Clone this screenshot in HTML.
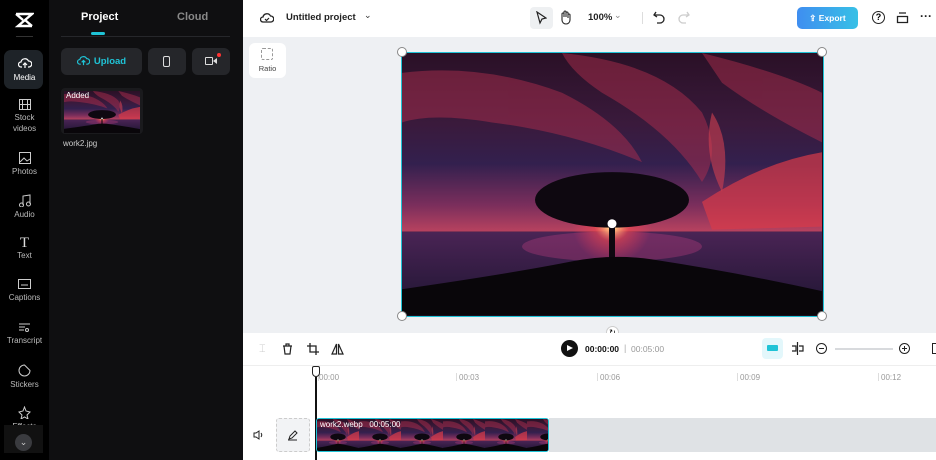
<!DOCTYPE html>
<html><head><meta charset="utf-8"><style>
*{margin:0;padding:0;box-sizing:border-box}
body{width:936px;height:460px;overflow:hidden;font-family:"Liberation Sans",sans-serif;background:#fff;position:relative}
.a{position:absolute}
.side{left:0;top:0;width:49px;height:460px;background:#000}
.panel{left:49px;top:0;width:194px;height:460px;background:#0f0f11}
.nav{position:absolute;left:0;width:49px;text-align:center;color:#bbb;font-size:8px;line-height:11px}
.nav svg{display:block;margin:0 auto 2px}
.btn{position:absolute;background:#25262a;border-radius:6px;top:48px;height:27px}
.tick{position:absolute;top:373px;width:1px;height:4px;background:#ddd}
.lbl{position:absolute;top:373px;font-size:8px;color:#999}
</style></head><body>
<svg width="0" height="0" style="position:absolute"><defs>
<linearGradient id="sky" x1="0" y1="0" x2="0" y2="1"><stop offset="0" stop-color="#2a1026"/><stop offset=".4" stop-color="#3a1a3c"/><stop offset=".62" stop-color="#33204e"/><stop offset=".85" stop-color="#7a2e5c"/><stop offset="1" stop-color="#b8425f"/></linearGradient>
<linearGradient id="sea" x1="0" y1="0" x2="0" y2="1"><stop offset="0" stop-color="#4a2455"/><stop offset="1" stop-color="#1c1430"/></linearGradient>
<radialGradient id="sun"><stop offset="0" stop-color="#fff"/><stop offset=".15" stop-color="#ffc080"/><stop offset=".45" stop-color="#ff4a4a" stop-opacity=".5"/><stop offset="1" stop-color="#ff3c5a" stop-opacity="0"/></radialGradient>
<symbol id="pic" viewBox="0 0 420 264" preserveAspectRatio="none">
<rect width="420" height="180" fill="url(#sky)"/>
<g fill="#b8304f" opacity=".45">
<path d="M0 20 Q80 10 160 40 Q220 70 240 110 Q170 80 90 70 Q30 60 0 70Z"/>
<path d="M160 0 Q260 10 300 60 Q320 100 300 130 Q270 80 200 40 Q170 20 160 0Z"/>
<path d="M300 0 Q380 20 420 40 L420 90 Q360 60 320 30Z"/>
</g>
<path d="M300 150 Q360 110 420 100 L420 175 L310 178Z" fill="#d93a48" opacity=".7"/>
<path d="M310 60 Q330 90 320 140 Q300 100 310 60Z" fill="#d04050" opacity=".6"/>
<rect y="180" width="420" height="84" fill="url(#sea)"/>
<ellipse cx="210" cy="195" rx="90" ry="15" fill="#c04080" opacity=".35"/>
<circle cx="210" cy="172" r="40" fill="url(#sun)"/>
<ellipse cx="210" cy="148" rx="77" ry="28" fill="#0e0810"/>
<rect x="207" y="165" width="6" height="42" fill="#0e0810"/>
<circle cx="210" cy="172" r="4.5" fill="#fff"/>
<path d="M0 238 Q110 222 170 210 Q210 202 250 208 Q340 222 420 240 L420 264 L0 264Z" fill="#09060a"/>
</symbol></defs></svg>

<div class="a side"></div>
<svg class="a" style="left:14px;top:12px" width="20" height="16" viewBox="0 0 20 16"><path d="M2 2h16L4 14h14M2 2l7 6M18 14l-7-6" stroke="#fff" stroke-width="2.4" fill="none"/></svg>
<div class="a" style="left:16px;top:36px;width:17px;height:1px;background:#333"></div>
<div class="a" style="left:4px;top:50px;width:39px;height:39px;background:#1e2328;border-radius:7px"></div>
<div class="nav" style="top:57px;color:#fff"><svg width="14" height="13" viewBox="0 0 14 13"><path d="M4 10H3a2.5 2.5 0 010-5 4 4 0 017.5-1A3 3 0 0111 10h-1M7 11V6M5 8l2-2 2 2" stroke="#fff" fill="none" stroke-width="1.2"/></svg>Media</div>
<div class="nav" style="top:99px"><svg width="12" height="11"><rect x=".5" y=".5" width="11" height="10" stroke="#ccc" fill="none"/><path d="M3.5 0v11M8.5 0v11M0 5.5h12" stroke="#ccc"/></svg>Stock<br>videos</div>
<div class="nav" style="top:152px"><svg width="12" height="12"><rect x=".5" y=".5" width="11" height="11" stroke="#ccc" fill="none"/><path d="M1 10l4-4 3 3 3-2" stroke="#ccc" fill="none"/></svg>Photos</div>
<div class="nav" style="top:194px"><svg width="12" height="13"><path d="M4 11V2l7-1v9" stroke="#ccc" fill="none"/><circle cx="2.5" cy="11" r="2" stroke="#ccc" fill="none"/><circle cx="9.5" cy="10" r="2" stroke="#ccc" fill="none"/></svg>Audio</div>
<div class="nav" style="top:236px"><span style="font-family:'Liberation Serif';font-size:15px;color:#ddd;display:block;line-height:14px">T</span>Text</div>
<div class="nav" style="top:279px"><svg width="13" height="11"><rect x=".5" y=".5" width="12" height="9" stroke="#ccc" fill="none"/><path d="M3 6h7" stroke="#ccc"/></svg>Captions</div>
<div class="nav" style="top:322px"><svg width="13" height="11"><path d="M1 2h11M1 5h6M1 8h5" stroke="#ccc"/><circle cx="9" cy="8" r="1.5" stroke="#ccc" fill="none"/></svg>Transcript</div>
<div class="nav" style="top:364px"><svg width="13" height="13"><path d="M6.5 1a5.5 5.5 0 105.5 5.5L6.5 1z" stroke="#ccc" fill="none"/></svg>Stickers</div>
<div class="nav" style="top:406px"><svg width="13" height="13"><path d="M6.5 1l1.5 4 4 1-3 3 1 4-3.5-2-3.5 2 1-4-3-3 4-1z" stroke="#ccc" fill="none"/></svg>Effects</div>
<div class="a" style="left:4px;top:425px;width:39px;height:28px;background:#111"></div>
<div class="a" style="left:15px;top:434px;width:17px;height:17px;border-radius:50%;background:#3a3b3f;color:#ccc;font-size:9px;text-align:center;line-height:16px">⌄</div>

<div class="a panel"></div>
<div class="a" style="left:81px;top:11px;color:#fff;font-weight:bold;font-size:11px">Project</div>
<div class="a" style="left:177px;top:11px;color:#888;font-weight:bold;font-size:11px">Cloud</div>
<div class="a" style="left:91px;top:32px;width:14px;height:3px;border-radius:2px;background:#1fc3d6"></div>
<div class="a" style="left:61px;top:36px;width:169px;height:1px;background:#26272b"></div>
<div class="btn" style="left:61px;width:81px"><div style="color:#1fc3d6;font-weight:bold;font-size:9.5px;text-align:center;line-height:27px"><svg width="13" height="11" viewBox="0 0 14 12" style="vertical-align:-2px;margin-right:4px"><path d="M4 10H3a2.5 2.5 0 010-5 4 4 0 017.5-1A3 3 0 0111 10h-1M7 11V6M5 8l2-2 2 2" stroke="#1fc3d6" fill="none" stroke-width="1.3"/></svg>Upload</div></div>
<div class="btn" style="left:148px;width:38px"><div style="position:absolute;left:15px;top:8px;width:7px;height:11px;border:1.3px solid #ddd;border-radius:2px"></div></div>
<div class="btn" style="left:192px;width:38px"><div style="position:absolute;left:13px;top:9px;width:8px;height:8px;border:1.3px solid #ddd;border-radius:1px"></div><div style="position:absolute;left:21px;top:10px;border:3px solid transparent;border-right:4px solid #ddd;border-left:0"></div><div style="position:absolute;left:25px;top:5px;width:4px;height:4px;border-radius:50%;background:#f33"></div></div>
<div class="a" style="left:61px;top:88px;width:82px;height:46px;border-radius:4px;overflow:hidden;background:#1a1a1d"><svg style="position:absolute;left:3px;top:3px" width="76" height="42"><use href="#pic" width="76" height="42"/></svg><div style="position:absolute;left:5px;top:3px;color:#fff;font-size:8px">Added</div></div>
<div class="a" style="left:63px;top:139px;color:#ccc;font-size:8px">work2.jpg</div>
<div class="a" style="left:243px;top:236px;width:5px;height:36px;background:#2a2b2e;border-radius:0 4px 4px 0"></div>

<!-- top bar -->
<div class="a" style="left:248px;top:0;width:688px;height:37px;background:#fff"></div>
<svg class="a" style="left:260px;top:11px" width="14" height="13" viewBox="0 0 14 13"><path d="M4 11H3a2.5 2.5 0 010-5 4 4 0 017.5-1A3 3 0 0111 11H4" stroke="#222" fill="none" stroke-width="1.3"/><path d="M5 8l1.5 1.5L9 7" stroke="#222" fill="none" stroke-width="1.2"/></svg>
<div class="a" style="left:286px;top:12px;font-size:9.5px;font-weight:bold;color:#222">Untitled project</div>
<div class="a" style="left:364px;top:10px;font-size:9px;color:#333">⌄</div>
<div class="a" style="left:530px;top:7px;width:23px;height:22px;background:#eef0f2;border-radius:4px"></div>
<svg class="a" style="left:535px;top:11px" width="12" height="14"><path d="M2 1l9 6-4 1-2 4z" stroke="#222" fill="none" stroke-width="1.2"/></svg>
<svg class="a" style="left:559px;top:10px" width="13" height="15"><path d="M3 8V4a1 1 0 012 0v3V2a1 1 0 012 0v5V3a1 1 0 012 0v5V5a1 1 0 012 0v5a4 4 0 01-4 4H7a4 4 0 01-4-4z" stroke="#222" fill="none" stroke-width="1.1"/></svg>
<div class="a" style="left:588px;top:12px;font-size:9.5px;color:#222;font-weight:bold">100%</div>
<div class="a" style="left:614px;top:10px;font-size:9px;color:#888">⌄</div>
<div class="a" style="left:642px;top:12px;width:1px;height:12px;background:#ddd"></div>
<svg class="a" style="left:653px;top:11px" width="12" height="13"><path d="M3 1L1 4l3 2M1 4h6a4 4 0 010 8H4" stroke="#222" fill="none" stroke-width="1.3"/></svg>
<svg class="a" style="left:678px;top:11px" width="12" height="13"><path d="M9 1l2 3-3 2M11 4H5a4 4 0 000 8h3" stroke="#ccc" fill="none" stroke-width="1.3"/></svg>
<div class="a" style="left:797px;top:7px;width:61px;height:22px;border-radius:5px;background:linear-gradient(90deg,#3f8ef0,#37c0e6);color:#fff;font-size:8.5px;font-weight:bold;line-height:22px;text-align:center">⇪ Export</div>
<div class="a" style="left:872px;top:11px;width:13px;height:13px;border:1.4px solid #222;border-radius:50%;font-size:9px;font-weight:bold;text-align:center;line-height:11px">?</div>
<svg class="a" style="left:896px;top:11px" width="13" height="13"><path d="M3 2h7M1.5 5.5h10v6h-10z" stroke="#222" fill="none" stroke-width="1.3"/></svg>
<div class="a" style="left:920px;top:9px;font-size:12px;color:#222;font-weight:bold">···</div>

<!-- canvas -->
<div class="a" style="left:243px;top:37px;width:693px;height:296px;background:#eef0f3"></div>
<div class="a" style="left:249px;top:43px;width:37px;height:35px;background:#fff;border-radius:6px"></div>
<div class="a" style="left:261px;top:48px;width:12px;height:12px;border:1px dashed #999;border-radius:2px"></div>
<div class="a" style="left:249px;top:64px;width:37px;text-align:center;font-size:7.5px;color:#444">Ratio</div>
<div class="a" style="left:401px;top:52px;width:423px;height:265px;border:1.5px solid #1fc3d6;background:#1a0f1e"><svg width="420" height="262" style="display:block"><use href="#pic" width="420" height="262"/></svg></div>
<div class="a" style="left:397px;top:47px;width:10px;height:10px;border-radius:50%;background:#fff;border:1px solid #888"></div>
<div class="a" style="left:817px;top:47px;width:10px;height:10px;border-radius:50%;background:#fff;border:1px solid #888"></div>
<div class="a" style="left:397px;top:311px;width:10px;height:10px;border-radius:50%;background:#fff;border:1px solid #888"></div>
<div class="a" style="left:817px;top:311px;width:10px;height:10px;border-radius:50%;background:#fff;border:1px solid #888"></div>
<div class="a" style="left:606px;top:326px;width:13px;height:13px;border-radius:50%;background:#fff;border:1px solid #ccc;font-size:8px;text-align:center;line-height:11px">↻</div>

<!-- timeline toolbar -->
<div class="a" style="left:243px;top:333px;width:693px;height:127px;background:#fff"></div>
<div class="a" style="left:243px;top:365px;width:693px;height:1px;background:#eee"></div>
<div class="a" style="left:259px;top:343px;font-size:11px;color:#ccc">⌶</div>
<svg class="a" style="left:282px;top:343px" width="11" height="12"><path d="M1 3h9M4 3V1h3v2M2 3l1 8h5l1-8" stroke="#222" fill="none" stroke-width="1.2"/></svg>
<svg class="a" style="left:307px;top:343px" width="12" height="12"><path d="M3 0v9h9M0 3h9v9" stroke="#222" fill="none" stroke-width="1.3"/></svg>
<svg class="a" style="left:331px;top:343px" width="13" height="12"><path d="M5.5 1L1 11h4.5zM7.5 1L12 11H7.5z" stroke="#222" fill="none" stroke-width="1.2"/></svg>
<div class="a" style="left:561px;top:340px;width:17px;height:17px;border-radius:50%;background:#111"></div>
<div class="a" style="left:567px;top:345px;border-left:6px solid #fff;border-top:3.5px solid transparent;border-bottom:3.5px solid transparent"></div>
<div class="a" style="left:585px;top:344px;font-size:8.5px;font-weight:bold;color:#111">00:00:00</div>
<div class="a" style="left:624px;top:343px;font-size:9px;color:#aaa">|</div>
<div class="a" style="left:631px;top:344px;font-size:8.5px;color:#999">00:05:00</div>
<div class="a" style="left:762px;top:338px;width:21px;height:21px;border-radius:4px;background:#e3f7fb"></div>
<div class="a" style="left:767px;top:345px;width:11px;height:6px;background:#1fc3d6;border-radius:1px"></div>
<svg class="a" style="left:791px;top:342px" width="13" height="13"><path d="M6.5 0v13M1 4h4v5H1M8 4h4v5H8" stroke="#222" fill="none" stroke-width="1.2"/></svg>
<div class="a" style="left:816px;top:343px;width:11px;height:11px;border:1.3px solid #222;border-radius:50%"></div><div class="a" style="left:819px;top:348px;width:5px;height:1.3px;background:#222"></div>
<div class="a" style="left:835px;top:348px;width:58px;height:1.5px;background:#d8dadd"></div>
<div class="a" style="left:899px;top:343px;width:11px;height:11px;border:1.3px solid #222;border-radius:50%"></div><div class="a" style="left:902px;top:348px;width:5px;height:1.3px;background:#222"></div><div class="a" style="left:904px;top:346px;width:1.3px;height:5px;background:#222"></div>
<div class="a" style="left:932px;top:343px;width:4px;height:11px;border:1.3px solid #222;border-right:0"></div>

<!-- ruler -->
<div class="tick" style="left:318px;height:8px"></div><div class="lbl" style="left:319px">00:00</div>
<div class="tick" style="left:456px;height:8px"></div><div class="lbl" style="left:459px">00:03</div>
<div class="tick" style="left:597px;height:8px"></div><div class="lbl" style="left:600px">00:06</div>
<div class="tick" style="left:737px;height:8px"></div><div class="lbl" style="left:740px">00:09</div>
<div class="tick" style="left:878px;height:8px"></div><div class="lbl" style="left:881px">00:12</div>
<div class="a" style="left:312px;top:366px;width:8px;height:11px;border:1.5px solid #222;border-radius:2px 2px 4px 4px;background:#fff"></div>
<div class="a" style="left:315px;top:377px;width:1.5px;height:83px;background:#111"></div>

<!-- track -->
<svg class="a" style="left:253px;top:430px" width="11" height="10"><path d="M1 3h2l3-2v8L3 7H1z" stroke="#222" fill="none"/><path d="M8 3q1.5 2 0 4" stroke="#222" fill="none"/></svg>
<div class="a" style="left:276px;top:418px;width:34px;height:34px;background:#f2f3f5;border:1px dashed #ccc;border-radius:3px"></div>
<svg class="a" style="left:287px;top:430px" width="11" height="11"><path d="M2 9l1-3 5-5 2 2-5 5zM1 10h9" stroke="#222" fill="none"/></svg>
<div class="a" style="left:549px;top:418px;width:387px;height:34px;background:#dfe2e5"></div>
<div class="a" style="left:316px;top:418px;width:233px;height:34px;border:1.5px solid #1fc3d6;border-radius:3px;overflow:hidden;background:#1a0f1e">
<svg width="240" height="32" style="position:absolute;left:0;top:0"><use href="#pic" x="0" width="42" height="32"/><use href="#pic" x="42" width="42" height="32"/><use href="#pic" x="84" width="42" height="32"/><use href="#pic" x="126" width="42" height="32"/><use href="#pic" x="168" width="42" height="32"/><use href="#pic" x="210" width="42" height="32"/></svg>
<div style="position:absolute;left:3px;top:1px;color:#fff;font-size:8px">work2.webp &nbsp;&nbsp;00:05:00</div></div>
</body></html>
